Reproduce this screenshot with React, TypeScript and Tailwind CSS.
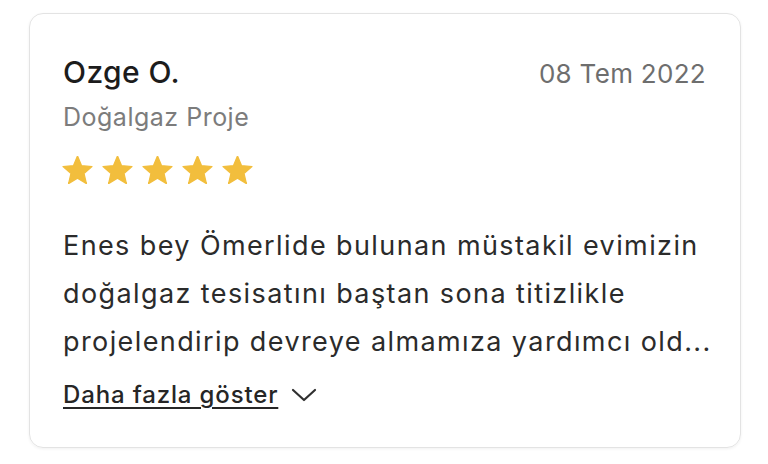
function Star() {
  return (
    <svg viewBox="0 0 24 22" className="w-[31px] h-[28px]">
      <polygon
        points="12,0 15.2,7.6 23.4,8.3 17.1,13.7 19,21.7 12,17.4 5,21.7 6.9,13.7 0.6,8.3 8.8,7.6"
        fill="#f2be3d"
        stroke="#f2be3d"
        strokeWidth="1"
        strokeLinejoin="round"
      />
    </svg>
  );
}

export default function App() {
  return (
    <div className="w-[768px] h-[464px] bg-white pt-[13px] pl-[29px] font-['Inter',sans-serif]">
      <div className="w-[712px] h-[435px] rounded-[14px] border border-[#e3e3e3] shadow-[0_1px_3px_rgba(0,0,0,0.06)] pt-[40px] pl-[33px] pr-[34px]">
        <div className="flex justify-between items-baseline">
          <span className="text-[30px] leading-[36px] font-medium text-[#1c1c1c] tracking-[0.4px]">Ozge O.</span>
          <span className="text-[26px] leading-[36px] text-[#6e6e6e] tracking-[0.3px]">08 Tem 2022</span>
        </div>
        <div className="mt-[10px] text-[25px] leading-[30px] text-[#7c7c7c] tracking-[0.5px]">Doğalgaz Proje</div>
        <div className="flex gap-[9px] mt-[24px] -ml-[1px]">
          <Star />
          <Star />
          <Star />
          <Star />
          <Star />
        </div>
        <div className="mt-[38px] text-[27px] leading-[48px] text-[#2b2b2b] tracking-[1.4px] whitespace-nowrap">
          <p>Enes bey Ömerlide bulunan müstakil evimizin</p>
          <p>doğalgaz tesisatını baştan sona titizlikle</p>
          <p>projelendirip devreye almamıza yardımcı old...</p>
        </div>
        <button className="flex items-center gap-[13px] mt-[14px]">
          <span className="text-[24px] leading-[30px] font-medium text-[#262626] tracking-[0.85px] underline decoration-[1.5px] underline-offset-[4px]">
            Daha fazla göster
          </span>
          <svg viewBox="0 0 26 14" className="w-[26px] h-[14px]" fill="none" stroke="#303030" strokeWidth="2.2" strokeLinecap="round" strokeLinejoin="round">
            <polyline points="2,2 13,12 24,2" />
          </svg>
        </button>
      </div>
    </div>
  );
}
